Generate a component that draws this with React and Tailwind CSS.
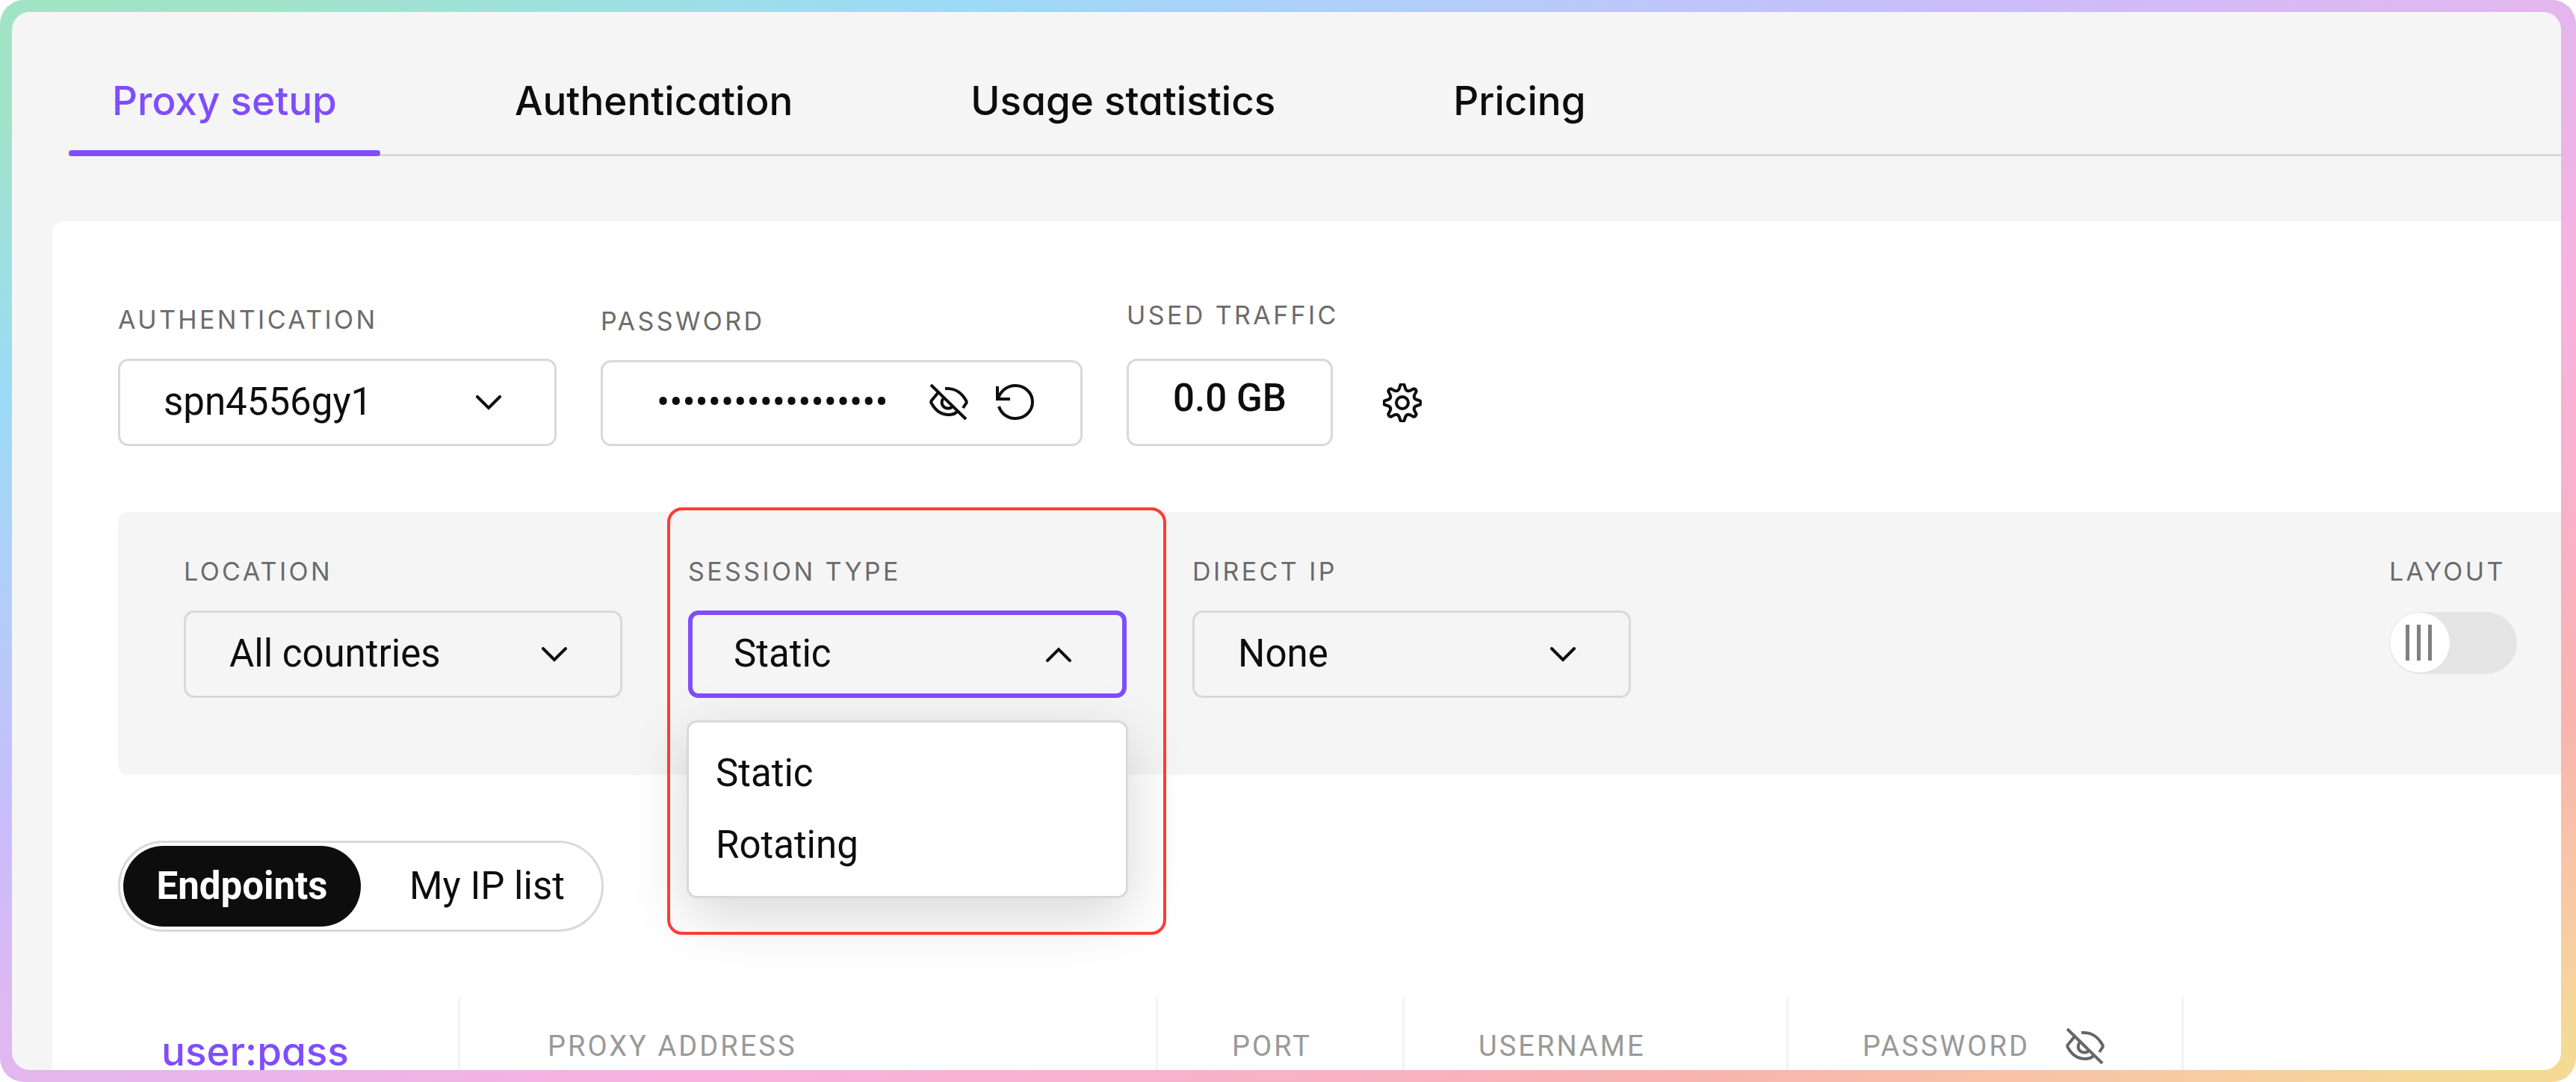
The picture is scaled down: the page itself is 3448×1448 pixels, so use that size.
import React from 'react';
import clsx from 'clsx';

const tabs = ['Proxy setup', 'Authentication', 'Usage statistics', 'Pricing'];

const heading = "font-['Inter'] font-medium [font-feature-settings:'cv11']";

const Chevron = ({ up }) => (
    <svg viewBox="0 0 34 20" fill="none" stroke="currentColor" strokeWidth="4" strokeLinecap="round" className={clsx('pointer-events-none absolute right-[74px] top-1/2 h-5 w-[34px] -translate-y-1/2', up && 'rotate-180')}>
        <path d="M2 2l15 15L32 2" />
    </svg>
);

const EyeOff = () => (
    <svg viewBox="0 0 52 48" fill="none" stroke="currentColor" strokeWidth="4" className="h-12 w-[52px]">
        <path d="M2 1l47 46" />
        <path d="M12 11L3 22c-1 1-1 3 0 4 5 9 13 15 23 15 4 0 8-1 11-4" />
        <path d="M21 6c12-1 22 5 28 16 1 1 1 3 0 4l-4 6" />
        <path d="M20 18c-4 3-4 8-2 11 3 4 9 5 13 1" />
    </svg>
);

const Reset = () => (
    <svg viewBox="0 0 52 48" fill="none" stroke="currentColor" strokeWidth="4" className="h-12 w-[52px]">
        <path d="M3 3v17h17" />
        <path d="M4 19C8 8 17 2 27 2c13 0 23 10 23 22S40 46 27 46C16 46 8 39 5 30" />
    </svg>
);

// Eight teeth: each one rises from a valley to a blunt tip
const teeth = Array.from({ length: 8 }, (_, i) => {
    const at = (deg, r) => {
        const a = ((i * 45 + deg) * Math.PI) / 180;
        return `${(26 + r * Math.sin(a)).toFixed(1)} ${(26 - r * Math.cos(a)).toFixed(1)}`;
    };
    return `${i ? 'L' : 'M'}${at(-13, 19)}L${at(-6, 24)}Q${at(0, 26)} ${at(6, 24)}L${at(13, 19)}Q${at(22.5, 16)} ${at(32, 19)}`;
}).join('') + 'Z';

const Gear = () => (
    <svg viewBox="0 0 52 52" fill="none" stroke="currentColor" strokeWidth="4" strokeLinejoin="round" className="h-[52px] w-[52px]">
        <path d={teeth} />
        <circle cx="26" cy="26" r="8" />
    </svg>
);

const Label = ({ children, className, ...props }) => (
    <label className={clsx("block whitespace-nowrap font-['Inter'] text-[34px] leading-10 tracking-widest text-[#6b6b6b]", className)} {...props}>
        {children}
    </label>
);

const Dropdown = ({ id, label, options, open }) => (
    <div>
        <Label htmlFor={id} className="mb-8">{label}</Label>
        <div className="relative">
            <select
                id={id}
                className={clsx(
                    'h-[117px] w-[587px] appearance-none rounded-[14px] bg-transparent text-[51px] outline-none',
                    open ? 'border-[6px] border-[#7f4dff] px-[55px]' : 'border-[3px] border-[#d9d9d9] px-[58px]'
                )}
            >
                {options.map((option) => <option key={option}>{option}</option>)}
            </select>
            <Chevron up={open} />
        </div>
    </div>
);

const App = () => {
    return (
        <div className="h-screen overflow-hidden rounded-[32px] bg-[linear-gradient(to_bottom_right,#a1e4c3_0%,#a1e3cb_6%,#9bdbf6_18%,#b0cef8_27%,#c9bdfb_38%,#e3b6ee_50%,#f8b2e0_63%,#f9b1c8_74%,#f8b4ae_83%,#f8c8a5_91%,#f5da96_98%)] py-4 pl-4 pr-5 font-['Roboto',sans-serif] text-[#0d0d0d]">
            <div className="h-full overflow-hidden rounded-[24px] bg-[#f5f5f5]">
                <nav className="ml-[76px] flex gap-[122px] border-b-[3px] border-[#d9d9d9] pt-[87px]">
                    {tabs.map((tab, i) => (
                        <a key={tab} href="#" className={clsx(heading, '-mb-[3px] whitespace-nowrap text-[53px] leading-[64px]', i === 0 && 'text-[#7f4dff]')}>
                            <span className="block px-[58px] pb-[34px]">{tab}</span>
                            <span className={clsx('block h-2 rounded-sm', i === 0 && 'bg-[#7f4dff]')} />
                        </a>
                    ))}
                </nav>

                <main className="ml-[54px] mt-[87px] rounded-tl-2xl bg-white pl-[88px] pt-[106px]">
                    {/* Credentials */}
                    <div className="flex items-end gap-[59px]">
                        <Dropdown id="authentication" label="AUTHENTICATION" options={['spn4556gy1']} />
                        <div>
                            <Label htmlFor="password" className="mb-8">PASSWORD</Label>
                            <div className="flex h-[115px] w-[645px] items-center rounded-[14px] border-[3px] border-[#d9d9d9] pl-[72px]">
                                <input id="password" type="password" defaultValue="spn4556gy1password" className="w-[365px] bg-transparent text-[51px] outline-none" />
                                <button type="button" aria-label="Show password" className="mb-1"><EyeOff /></button>
                                <button type="button" aria-label="Reset password" className="mb-1 ml-9"><Reset /></button>
                            </div>
                        </div>
                        <div>
                            <Label htmlFor="traffic" className="mb-[38px]">USED TRAFFIC</Label>
                            <output id="traffic" className="flex h-[117px] w-[276px] justify-center rounded-[14px] border-[3px] border-[#d9d9d9] pt-5 text-[51px] font-medium leading-[60px]">0.0 GB</output>
                        </div>
                        <button type="button" aria-label="Settings" className="mb-8"><Gear /></button>
                    </div>

                    {/* Proxy options */}
                    <div className="mt-[88px] flex gap-[88px] rounded-l-[14px] bg-[#f5f5f5] pb-[103px] pl-[88px] pr-[59px] pt-[60px]">
                        <Dropdown id="location" label="LOCATION" options={['All countries']} />
                        <div className="relative">
                            <Dropdown id="session" label="SESSION TYPE" options={['Static', 'Rotating']} open />
                            <ul className="absolute -inset-x-0.5 top-full mt-[30px] rounded-[14px] border-[3px] border-[#d9d9d9] bg-white py-5 text-[51px] leading-[96px] shadow-[0_24px_80px_rgba(0,0,0,0.16)]">
                                <li className="px-[36px]">Static</li>
                                <li className="px-[36px]">Rotating</li>
                            </ul>
                            <div className="pointer-events-none absolute -bottom-[317px] -left-[28px] -right-[53px] -top-[66px] rounded-[20px] border-4 border-[#ff3b30]" />
                        </div>
                        <Dropdown id="direct-ip" label="DIRECT IP" options={['None']} />
                        <div className="ml-auto">
                            <Label htmlFor="layout" className="mb-[34px]">LAYOUT</Label>
                            <div className="relative h-[83px] w-[171px] rounded-full bg-[#e4e4e4] p-px">
                                <input id="layout" type="checkbox" role="switch" className="absolute inset-0 appearance-none" />
                                <div className="flex h-20 w-20 items-center justify-center gap-2.5 rounded-full bg-white pr-1">
                                    <span className="h-12 w-[5px] bg-[#808080]" />
                                    <span className="h-12 w-[5px] bg-[#808080]" />
                                    <span className="h-12 w-[5px] bg-[#808080]" />
                                </div>
                            </div>
                        </div>
                    </div>

                    {/* View switch */}
                    <div className="mt-[88px] flex h-[122px] w-[650px] rounded-full border-[3px] border-[#d9d9d9] p-1 text-[51px]">
                        <button type="button" className="w-[318px] rounded-full bg-[#0d0d0d] font-bold text-white">Endpoints</button>
                        <button type="button" className="flex-1 pl-5">My IP list</button>
                    </div>

                    <div className="mt-[88px] flex">
                        <div className="w-[455px] shrink-0 pl-[58px] pt-10">
                            <a href="#" className={clsx(heading, 'text-[53px] leading-[64px] text-[#7f4dff]')}>user:pass</a>
                        </div>
                        <table className="w-full table-fixed text-left text-[38px] text-[#999]">
                            <thead>
                                <tr className="h-[130px] [&>*]:border-l-[3px] [&>*]:border-[#f2f2f2] [&>th]:font-normal [&>th]:tracking-[0.08em]">
                                    <th className="w-[934px] pl-[117px]">PROXY ADDRESS</th>
                                    <th className="w-[330px] pl-[99px]">PORT</th>
                                    <th className="w-[514px] pl-[99px]">USERNAME</th>
                                    <th className="w-[529px] pl-[99px]">
                                        <div className="flex items-center gap-12">
                                            PASSWORD
                                            <button type="button" aria-label="Show passwords" className="text-[#666]"><EyeOff /></button>
                                        </div>
                                    </th>
                                    <td />
                                </tr>
                            </thead>
                        </table>
                    </div>
                </main>
            </div>
        </div>
    );
};

export default App;
